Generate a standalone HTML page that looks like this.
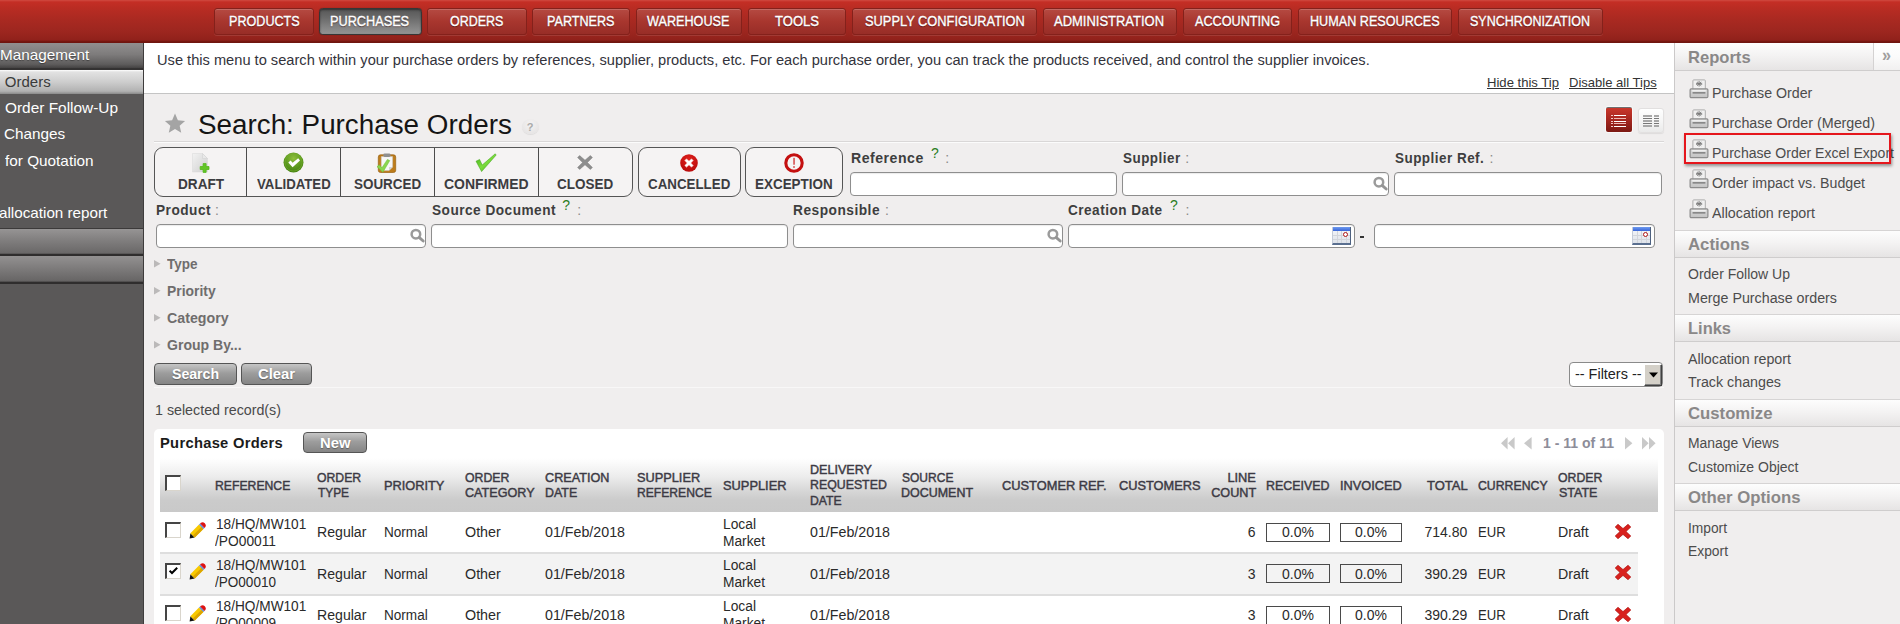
<!DOCTYPE html>
<html><head><meta charset="utf-8"><title>Purchase Orders</title>
<style>
*{box-sizing:border-box;margin:0;padding:0}
html,body{width:1900px;height:624px;overflow:hidden;background:#f0eeee;font-family:"Liberation Sans",sans-serif;font-size:14px;color:#222}
body{position:relative}
.t{position:absolute;white-space:nowrap;display:block}
.nb{position:absolute;top:8.4px;height:26.2px;border:1.2px solid #84211b;border-radius:3px;background:linear-gradient(#b54a42,#a8362e 50%,#982d27);box-shadow:inset 0 1px 0 rgba(255,255,255,.18),0 1px 0 rgba(255,255,255,.10)}
.nb.act{background:linear-gradient(#575757,#6a6a6a 35%,#858585 75%,#939393);border:1.5px solid #363636;border-radius:3.5px;box-shadow:inset 0 1px 2px rgba(0,0,0,.45),0 0 1px rgba(0,0,0,.4)}
.inp{position:absolute;height:24px;background:#fff;border:1px solid #8e8e8e;border-radius:4px;box-shadow:inset 0 1px 1px rgba(0,0,0,.08)}
.gbtn{position:absolute;border:1px solid #555;border-radius:4px;background:linear-gradient(#c6c6c6,#9d9d9d 45%,#858585);}
.sh{position:absolute;left:1675px;width:225px;height:27px;background:linear-gradient(#fdfdfd,#f4f3f3 45%,#e6e4e4);border-top:1px solid #d6d4d4;border-bottom:1px solid #cfcdcd}
</style></head><body>
<div class="" style="position:absolute;left:0px;top:0px;width:1900px;height:43px;background:linear-gradient(#d04a40 0,#c42e25 2px,#b92c23 8px,#a92921 20px,#9c261f 32px,#90211b 40px,#76170f 41.5px,#6c140f 43px);"></div>
<div class="nb" style="left:214.4px;width:99.4px"></div>
<span class="t " style="top:12.90px;font-size:14px;line-height:16px;height:16px;color:#fff;left:228.60px;transform-origin:0 0;transform:scaleX(0.9000);text-shadow:0 1px 1px rgba(40,0,0,.6);-webkit-text-stroke:.35px #fff;">PRODUCTS</span>
<div class="nb act" style="left:319.3px;width:102.4px;top:8.2px;height:26.4px"></div>
<span class="t " style="top:12.90px;font-size:14px;line-height:16px;height:16px;color:#fff;left:330.28px;transform-origin:0 0;transform:scaleX(0.9078);text-shadow:0 1px 1px rgba(40,0,0,.6);-webkit-text-stroke:.35px #fff;">PURCHASES</span>
<div class="nb" style="left:427.4px;width:99.4px"></div>
<span class="t " style="top:12.90px;font-size:14px;line-height:16px;height:16px;color:#fff;left:450.00px;transform-origin:0 0;transform:scaleX(0.8903);text-shadow:0 1px 1px rgba(40,0,0,.6);-webkit-text-stroke:.35px #fff;">ORDERS</span>
<div class="nb" style="left:532.4px;width:97.4px"></div>
<span class="t " style="top:12.90px;font-size:14px;line-height:16px;height:16px;color:#fff;left:546.80px;transform-origin:0 0;transform:scaleX(0.9007);text-shadow:0 1px 1px rgba(40,0,0,.6);-webkit-text-stroke:.35px #fff;">PARTNERS</span>
<div class="nb" style="left:636.4px;width:105.4px"></div>
<span class="t " style="top:12.90px;font-size:14px;line-height:16px;height:16px;color:#fff;left:647.00px;transform-origin:0 0;transform:scaleX(0.9028);text-shadow:0 1px 1px rgba(40,0,0,.6);-webkit-text-stroke:.35px #fff;">WAREHOUSE</span>
<div class="nb" style="left:748.4px;width:97.4px"></div>
<span class="t " style="top:12.90px;font-size:14px;line-height:16px;height:16px;color:#fff;left:774.50px;transform-origin:0 0;transform:scaleX(0.9322);text-shadow:0 1px 1px rgba(40,0,0,.6);-webkit-text-stroke:.35px #fff;">TOOLS</span>
<div class="nb" style="left:852.4px;width:184.4px"></div>
<span class="t " style="top:12.90px;font-size:14px;line-height:16px;height:16px;color:#fff;left:864.50px;transform-origin:0 0;transform:scaleX(0.9171);text-shadow:0 1px 1px rgba(40,0,0,.6);-webkit-text-stroke:.35px #fff;">SUPPLY CONFIGURATION</span>
<div class="nb" style="left:1043.4px;width:133.4px"></div>
<span class="t " style="top:12.90px;font-size:14px;line-height:16px;height:16px;color:#fff;left:1054.40px;transform-origin:0 0;transform:scaleX(0.9264);text-shadow:0 1px 1px rgba(40,0,0,.6);-webkit-text-stroke:.35px #fff;">ADMINISTRATION</span>
<div class="nb" style="left:1183.4px;width:108.4px"></div>
<span class="t " style="top:12.90px;font-size:14px;line-height:16px;height:16px;color:#fff;left:1194.50px;transform-origin:0 0;transform:scaleX(0.9032);text-shadow:0 1px 1px rgba(40,0,0,.6);-webkit-text-stroke:.35px #fff;">ACCOUNTING</span>
<div class="nb" style="left:1298.4px;width:153.4px"></div>
<span class="t " style="top:12.90px;font-size:14px;line-height:16px;height:16px;color:#fff;left:1309.60px;transform-origin:0 0;transform:scaleX(0.9013);text-shadow:0 1px 1px rgba(40,0,0,.6);-webkit-text-stroke:.35px #fff;">HUMAN RESOURCES</span>
<div class="nb" style="left:1458.4px;width:144.4px"></div>
<span class="t " style="top:12.90px;font-size:14px;line-height:16px;height:16px;color:#fff;left:1470.40px;transform-origin:0 0;transform:scaleX(0.8928);text-shadow:0 1px 1px rgba(40,0,0,.6);-webkit-text-stroke:.35px #fff;">SYNCHRONIZATION</span>
<div class="" style="position:absolute;left:0px;top:43px;width:144px;height:581px;background:#5a5858;border-right:1px solid #3e3c3c;"></div>
<div class="" style="position:absolute;left:0px;top:43px;width:143px;height:27px;background:linear-gradient(#918f8f,#7e7c7c 45%,#5e5c5c 85%,#444242);border-bottom:2px solid #343232;"></div>
<span class="t " style="top:46.20px;font-size:15px;line-height:17px;height:17px;color:#fff;left:-0.30px;transform-origin:0 0;transform:scaleX(1.0199);text-shadow:0 1px 1px rgba(0,0,0,.4);">Management</span>
<div class="" style="position:absolute;left:0px;top:70px;width:143px;height:24px;background:linear-gradient(#ffffff 0,#e2e2e2 2px,#cdcdcd 50%,#b2b2b2 88%,#8a8a8a 100%);"></div>
<span class="t " style="top:73.10px;font-size:15px;line-height:17px;height:17px;color:#3a3a3a;left:4.80px;transform-origin:0 0;">Orders</span>
<span class="t " style="top:98.60px;font-size:15px;line-height:17px;height:17px;color:#fff;left:4.60px;transform-origin:0 0;transform:scaleX(1.0270);">Order Follow-Up</span>
<span class="t " style="top:124.80px;font-size:15px;line-height:17px;height:17px;color:#fff;left:4.30px;transform-origin:0 0;transform:scaleX(1.0192);">Changes</span>
<span class="t " style="top:151.80px;font-size:15px;line-height:17px;height:17px;color:#fff;left:4.80px;transform-origin:0 0;transform:scaleX(1.0217);">for Quotation</span>
<span class="t " style="top:203.50px;font-size:15px;line-height:17px;height:17px;color:#fff;left:-0.80px;transform-origin:0 0;transform:scaleX(1.0147);">allocation report</span>
<div class="" style="position:absolute;left:0px;top:228px;width:143px;height:28px;background:linear-gradient(#969494,#7e7c7c 50%,#6a6868 96%,#4a4848);border-top:1px solid #3c3a3a;border-bottom:2px solid #2f2d2d;"></div>
<div class="" style="position:absolute;left:0px;top:256px;width:143px;height:28px;background:linear-gradient(#939191,#7c7a7a 50%,#686666 94%,#474545);border-bottom:2.5px solid #2f2d2d;"></div>
<div class="" style="position:absolute;left:144px;top:43px;width:1531px;height:51px;background:#fff;border-bottom:1px solid #c4c4c4;"></div>
<span class="t " style="top:52.00px;font-size:14px;line-height:16px;height:16px;color:#33333b;left:157.30px;transform-origin:0 0;transform:scaleX(1.0452);">Use this menu to search within your purchase orders by references, supplier, products, etc. For each purchase order, you can track the products received, and control the supplier invoices.</span>
<span class="t " style="top:74.70px;font-size:13px;line-height:15px;height:15px;color:#333;left:1487.00px;transform-origin:0 0;transform:scaleX(1.0065);text-decoration:underline;">Hide this Tip</span>
<span class="t " style="top:74.70px;font-size:13px;line-height:15px;height:15px;color:#333;left:1569.00px;transform-origin:0 0;transform:scaleX(1.0031);text-decoration:underline;">Disable all Tips</span>
<svg style="position:absolute;left:164px;top:113.4px" width="22" height="22" viewBox="0 0 22 22"><path fill="#a4a4a4" d="M11.00 0.60 L13.88 7.24 L21.08 7.92 L15.66 12.71 L17.23 19.78 L11.00 16.10 L4.77 19.78 L6.34 12.71 L0.92 7.92 L8.12 7.24 Z"/></svg>
<span class="t " style="top:109.50px;font-size:27px;line-height:30px;height:30px;color:#151515;left:198.40px;transform-origin:0 0;transform:scaleX(1.0301);">Search: Purchase Orders</span>
<div class="" style="position:absolute;left:521.5px;top:119px;width:17px;height:15px;border-radius:50%;background:radial-gradient(circle at 50% 35%,#f4f3f3,#e2e0e0);box-shadow:0 1px 1px rgba(0,0,0,.08);"></div>
<span class="t " style="top:120.60px;font-size:11px;line-height:12px;height:12px;color:#aaa;font-weight:bold;left:230.00px;width:600px;text-align:center;transform-origin:50% 0;">?</span>
<div class="" style="position:absolute;left:154px;top:141px;width:1510px;height:2px;border-top:1px solid #d9d7d7;border-bottom:1px solid #fbfbfb;"></div>
<div class="" style="position:absolute;left:1606px;top:107px;width:26px;height:25px;background:linear-gradient(#c9372b,#a5261f 50%,#7c1913);border-top:1px solid #6f6f6f;border-radius:2px;box-shadow:0 0 0 1px rgba(255,255,255,.6);"><div style="position:absolute;left:5px;top:7px;width:2px;height:1px;background:#f3c9c5"></div><div style="position:absolute;left:8px;top:7px;width:12px;height:1px;background:#fff"></div><div style="position:absolute;left:5px;top:10px;width:2px;height:1px;background:#f3c9c5"></div><div style="position:absolute;left:8px;top:10px;width:12px;height:1px;background:#f0b8b3"></div><div style="position:absolute;left:5px;top:12.5px;width:2px;height:1px;background:#f3c9c5"></div><div style="position:absolute;left:8px;top:12.5px;width:12px;height:1px;background:#fff"></div><div style="position:absolute;left:5px;top:15px;width:2px;height:1px;background:#f3c9c5"></div><div style="position:absolute;left:8px;top:15px;width:12px;height:1px;background:#f0b8b3"></div><div style="position:absolute;left:5px;top:17.5px;width:2px;height:1px;background:#f3c9c5"></div><div style="position:absolute;left:8px;top:17.5px;width:12px;height:1px;background:#fff"></div></div>
<div class="" style="position:absolute;left:1637.5px;top:108px;width:26px;height:24.5px;background:linear-gradient(#ffffff,#f4f4f4 60%,#eaeaea);border:1px solid #e2e0e0;border-radius:3px;box-shadow:0 1px 1px rgba(0,0,0,.08);"><div style="position:absolute;left:4.5px;top:6.3px;width:9px;height:1.3px;background:#a8a8a8"></div><div style="position:absolute;left:15px;top:6.3px;width:5px;height:1.3px;background:#a8a8a8"></div><div style="position:absolute;left:4.5px;top:8.8px;width:9px;height:1.3px;background:#777"></div><div style="position:absolute;left:15px;top:8.8px;width:5px;height:1.3px;background:#777"></div><div style="position:absolute;left:4.5px;top:11.4px;width:9px;height:1.3px;background:#a8a8a8"></div><div style="position:absolute;left:15px;top:11.4px;width:5px;height:1.3px;background:#a8a8a8"></div><div style="position:absolute;left:4.5px;top:13.9px;width:9px;height:1.3px;background:#777"></div><div style="position:absolute;left:15px;top:13.9px;width:5px;height:1.3px;background:#777"></div><div style="position:absolute;left:4.5px;top:16.4px;width:9px;height:1.3px;background:#a8a8a8"></div><div style="position:absolute;left:15px;top:16.4px;width:5px;height:1.3px;background:#a8a8a8"></div></div>
<div class="" style="position:absolute;left:154px;top:147px;width:479px;height:50px;background:#f5f3f3;border:1px solid #555;border-radius:9px;"></div>
<div class="" style="position:absolute;left:246px;top:148px;width:1px;height:48px;background:#4c4c4c;"></div>
<div class="" style="position:absolute;left:340px;top:148px;width:1px;height:48px;background:#4c4c4c;"></div>
<div class="" style="position:absolute;left:434px;top:148px;width:1px;height:48px;background:#4c4c4c;"></div>
<div class="" style="position:absolute;left:538px;top:148px;width:1px;height:48px;background:#4c4c4c;"></div>
<div class="" style="position:absolute;left:638px;top:147px;width:102.5px;height:50px;background:#f5f3f3;border:1px solid #555;border-radius:9px;"></div>
<div class="" style="position:absolute;left:745px;top:147px;width:98px;height:50px;background:#f5f3f3;border:1px solid #555;border-radius:9px;"></div>
<span class="t " style="top:175.60px;font-size:14px;line-height:16px;height:16px;color:#3c3c40;font-weight:bold;left:177.60px;transform-origin:0 0;transform:scaleX(0.9719);">DRAFT</span>
<span class="t " style="top:175.60px;font-size:14px;line-height:16px;height:16px;color:#3c3c40;font-weight:bold;left:257.30px;transform-origin:0 0;transform:scaleX(0.9445);">VALIDATED</span>
<span class="t " style="top:175.60px;font-size:14px;line-height:16px;height:16px;color:#3c3c40;font-weight:bold;left:354.40px;transform-origin:0 0;transform:scaleX(0.9599);">SOURCED</span>
<span class="t " style="top:175.60px;font-size:14px;line-height:16px;height:16px;color:#3c3c40;font-weight:bold;left:443.70px;transform-origin:0 0;transform:scaleX(0.9991);">CONFIRMED</span>
<span class="t " style="top:175.60px;font-size:14px;line-height:16px;height:16px;color:#3c3c40;font-weight:bold;left:557.40px;transform-origin:0 0;transform:scaleX(0.9616);">CLOSED</span>
<span class="t " style="top:175.60px;font-size:14px;line-height:16px;height:16px;color:#3c3c40;font-weight:bold;left:647.60px;transform-origin:0 0;transform:scaleX(0.9533);">CANCELLED</span>
<span class="t " style="top:175.60px;font-size:14px;line-height:16px;height:16px;color:#3c3c40;font-weight:bold;left:754.70px;transform-origin:0 0;transform:scaleX(0.9604);">EXCEPTION</span>

<svg style="position:absolute;left:191px;top:152px" width="20" height="22" viewBox="0 0 20 22"><defs><linearGradient id="pg" x1="0" y1="0" x2="1" y2="1"><stop offset="0" stop-color="#f2f2f2"/><stop offset="1" stop-color="#cfcfcf"/></linearGradient></defs><path d="M1.5 1.5 H11.5 L16.5 6.5 V20 H1.5 Z" fill="url(#pg)" stroke="#dcdcdc" stroke-width=".6"/><path d="M11.5 1.5 V6.5 H16.5 Z" fill="#e9e9e9" stroke="#cfcfcf" stroke-width=".5"/><path d="M12.1 11.6 h3 v2.9 h2.9 v3 h-2.9 v2.9 h-3 v-2.9 h-2.9 v-3 h2.9 Z" fill="#62c626" stroke="#55b81c" stroke-width=".8" stroke-linejoin="round"/></svg>
<svg style="position:absolute;left:282.9px;top:151.9px" width="21" height="21" viewBox="0 0 21 21"><defs><radialGradient id="vg" cx=".5" cy=".3" r=".7"><stop offset="0" stop-color="#8fbf3c"/><stop offset=".6" stop-color="#5d9a1f"/><stop offset="1" stop-color="#44800f"/></radialGradient></defs><circle cx="10.5" cy="10.5" r="10" fill="url(#vg)"/><circle cx="10.5" cy="10.5" r="8.6" fill="none" stroke="#7db233" stroke-width=".8" opacity=".7"/><path d="M5.3 10.6 L7.6 8.6 L9.6 10.8 L15.2 6.3 L17 8.4 L9.6 15.2 Z" fill="#fff"/></svg>
<svg style="position:absolute;left:376px;top:152.5px" width="22" height="21" viewBox="0 0 22 21"><rect x="2.3" y="1.8" width="17.4" height="17.7" rx="2.2" fill="#bd7c1b" stroke="#9a6212" stroke-width=".7"/><path d="M5.3 3.6 H16.6 V14 L13 17.6 H5.3 Z" fill="#f7f7f7" stroke="#c8c8c8" stroke-width=".5"/><path d="M13 17.6 V14 H16.6 Z" fill="#d4d4d4"/><rect x="7.3" y=".5" width="7.2" height="3.4" rx="1.4" fill="#8f8f8f"/><path d="M1 13.8 L3.2 11.8 L5.9 14.8 L11.4 6.4 L13.8 7.6 L6.9 19.2 Z" fill="#8ad650" stroke="#68bd30" stroke-width=".5"/></svg>
<svg style="position:absolute;left:475px;top:153px" width="22" height="20" viewBox="0 0 22 20"><defs><linearGradient id="cg" x1="0" y1="0" x2="1" y2="1"><stop offset="0" stop-color="#3fae18"/><stop offset=".5" stop-color="#7bdc3c"/><stop offset="1" stop-color="#3fae18"/></linearGradient></defs><path d="M1 8.2 L4.6 6.4 L7.2 12 L20.2 .8 L21.2 2 L6.6 18.6 Z" fill="url(#cg)" stroke="#3a9f14" stroke-width=".5"/></svg>
<svg style="position:absolute;left:577px;top:155px" width="16" height="15" viewBox="0 0 16 15"><path d="M2.6 .6 L8 5.2 L13.4 .6 L15.4 2.6 L10.4 7.5 L15.4 12.4 L13.4 14.4 L8 9.8 L2.6 14.4 L.6 12.4 L5.6 7.5 L.6 2.6 Z" fill="#8d8d8d" stroke="#7a7a7a" stroke-width=".5"/></svg>
<svg style="position:absolute;left:680px;top:154px" width="18" height="18" viewBox="0 0 18 18"><defs><radialGradient id="rg" cx=".5" cy=".3" r=".7"><stop offset="0" stop-color="#e0201c"/><stop offset="1" stop-color="#b90b0b"/></radialGradient></defs><circle cx="9" cy="9" r="8.8" fill="url(#rg)"/><path d="M6.5 4.9 L9 7.3 L11.5 4.9 L13.1 6.5 L10.7 9 L13.1 11.5 L11.5 13.1 L9 10.7 L6.5 13.1 L4.9 11.5 L7.3 9 L4.9 6.5 Z" fill="#fff" stroke="#fff" stroke-width=".6" stroke-linejoin="round"/></svg>
<svg style="position:absolute;left:784px;top:153px" width="20" height="20" viewBox="0 0 20 20"><circle cx="10" cy="10" r="8.2" fill="#f6f4f4" stroke="#c41010" stroke-width="3.1"/><rect x="9.2" y="4.8" width="1.7" height="7" rx=".6" fill="#d85a5a"/><circle cx="10" cy="14.1" r="1" fill="#d85a5a"/></svg>

<span class="t " style="top:149.70px;font-size:14px;line-height:16px;height:16px;color:#3e3e3e;font-weight:bold;letter-spacing:0.5px;left:850.70px;transform-origin:0 0;transform:scaleX(1.0083);">Reference</span>
<span class="t " style="top:145.00px;font-size:14px;line-height:16px;height:16px;color:#2a7d1c;left:931.00px;transform-origin:0 0;">?</span>
<span class="t " style="top:150.00px;font-size:14px;line-height:16px;height:16px;color:#8a8a8a;left:945.30px;transform-origin:0 0;">:</span>
<span class="t " style="top:149.70px;font-size:14px;line-height:16px;height:16px;color:#3e3e3e;font-weight:bold;letter-spacing:0.5px;left:1123.00px;transform-origin:0 0;transform:scaleX(0.9599);">Supplier</span>
<span class="t " style="top:150.00px;font-size:14px;line-height:16px;height:16px;color:#8a8a8a;left:1185.30px;transform-origin:0 0;">:</span>
<span class="t " style="top:149.70px;font-size:14px;line-height:16px;height:16px;color:#3e3e3e;font-weight:bold;letter-spacing:0.5px;left:1395.00px;transform-origin:0 0;transform:scaleX(0.9618);">Supplier Ref.</span>
<span class="t " style="top:150.00px;font-size:14px;line-height:16px;height:16px;color:#8a8a8a;left:1489.50px;transform-origin:0 0;">:</span>
<span class="t " style="top:201.80px;font-size:14px;line-height:16px;height:16px;color:#3e3e3e;font-weight:bold;letter-spacing:0.5px;left:156.00px;transform-origin:0 0;transform:scaleX(0.9753);">Product</span>
<span class="t " style="top:202.10px;font-size:14px;line-height:16px;height:16px;color:#8a8a8a;left:214.90px;transform-origin:0 0;">:</span>
<span class="t " style="top:201.80px;font-size:14px;line-height:16px;height:16px;color:#3e3e3e;font-weight:bold;letter-spacing:0.5px;left:432.00px;transform-origin:0 0;transform:scaleX(0.9741);">Source Document</span>
<span class="t " style="top:197.10px;font-size:14px;line-height:16px;height:16px;color:#2a7d1c;left:562.20px;transform-origin:0 0;">?</span>
<span class="t " style="top:202.10px;font-size:14px;line-height:16px;height:16px;color:#8a8a8a;left:577.30px;transform-origin:0 0;">:</span>
<span class="t " style="top:201.80px;font-size:14px;line-height:16px;height:16px;color:#3e3e3e;font-weight:bold;letter-spacing:0.5px;left:793.00px;transform-origin:0 0;transform:scaleX(0.9804);">Responsible</span>
<span class="t " style="top:202.10px;font-size:14px;line-height:16px;height:16px;color:#8a8a8a;left:885.00px;transform-origin:0 0;">:</span>
<span class="t " style="top:201.80px;font-size:14px;line-height:16px;height:16px;color:#3e3e3e;font-weight:bold;letter-spacing:0.5px;left:1068.40px;transform-origin:0 0;transform:scaleX(0.9700);">Creation Date</span>
<span class="t " style="top:197.10px;font-size:14px;line-height:16px;height:16px;color:#2a7d1c;left:1170.00px;transform-origin:0 0;">?</span>
<span class="t " style="top:202.10px;font-size:14px;line-height:16px;height:16px;color:#8a8a8a;left:1185.50px;transform-origin:0 0;">:</span>
<div class="inp" style="left:850px;top:172px;width:267px"></div>
<div class="inp" style="left:1122px;top:172px;width:267px"></div>
<svg style="position:absolute;left:1372px;top:175.5px" width="17" height="17" viewBox="0 0 17 17"><circle cx="6.9" cy="6.2" r="4.3" fill="#fff" stroke="#9b9b9b" stroke-width="2.5"/><path d="M10.4 9.6 L14.2 13" stroke="#959595" stroke-width="2.9" stroke-linecap="round"/></svg>
<div class="inp" style="left:1394px;top:172px;width:268px"></div>
<div class="inp" style="left:156px;top:224px;width:270px"></div>
<svg style="position:absolute;left:409px;top:227.5px" width="17" height="17" viewBox="0 0 17 17"><circle cx="6.9" cy="6.2" r="4.3" fill="#fff" stroke="#9b9b9b" stroke-width="2.5"/><path d="M10.4 9.6 L14.2 13" stroke="#959595" stroke-width="2.9" stroke-linecap="round"/></svg>
<div class="inp" style="left:431px;top:224px;width:357px"></div>
<div class="inp" style="left:793px;top:224px;width:270px"></div>
<svg style="position:absolute;left:1046px;top:227.5px" width="17" height="17" viewBox="0 0 17 17"><circle cx="6.9" cy="6.2" r="4.3" fill="#fff" stroke="#9b9b9b" stroke-width="2.5"/><path d="M10.4 9.6 L14.2 13" stroke="#959595" stroke-width="2.9" stroke-linecap="round"/></svg>
<div class="inp" style="left:1068px;top:224px;width:287px"></div>
<div style="position:absolute;left:1332px;top:227px;width:19px;height:18px;background:linear-gradient(#f6f7fa,#dfe3ea);border-right:1.5px solid #4d607f;border-bottom:2px solid #5a6f90;border-left:1px solid #c3cbd9;overflow:hidden"><div style="position:absolute;left:0;top:0;width:100%;height:4px;background:linear-gradient(#6f9aef,#3966d8)"></div><div style="position:absolute;left:0;top:7.5px;width:100%;height:1px;background:#d2d5db"></div><div style="position:absolute;left:0;top:12px;width:100%;height:1px;background:#d2d5db"></div><div style="position:absolute;left:4px;top:4px;width:1px;height:14px;background:#d2d5db"></div><div style="position:absolute;left:8px;top:4px;width:1px;height:14px;background:#d2d5db"></div><div style="position:absolute;left:12.5px;top:4px;width:1px;height:14px;background:#d2d5db"></div><div style="position:absolute;left:10px;top:5px;width:5.4px;height:5.4px;border-radius:50%;border:1.5px solid #b01616;background:#fff"></div></div>
<div class="inp" style="left:1374px;top:224px;width:281px"></div>
<div style="position:absolute;left:1632px;top:227px;width:19px;height:18px;background:linear-gradient(#f6f7fa,#dfe3ea);border-right:1.5px solid #4d607f;border-bottom:2px solid #5a6f90;border-left:1px solid #c3cbd9;overflow:hidden"><div style="position:absolute;left:0;top:0;width:100%;height:4px;background:linear-gradient(#6f9aef,#3966d8)"></div><div style="position:absolute;left:0;top:7.5px;width:100%;height:1px;background:#d2d5db"></div><div style="position:absolute;left:0;top:12px;width:100%;height:1px;background:#d2d5db"></div><div style="position:absolute;left:4px;top:4px;width:1px;height:14px;background:#d2d5db"></div><div style="position:absolute;left:8px;top:4px;width:1px;height:14px;background:#d2d5db"></div><div style="position:absolute;left:12.5px;top:4px;width:1px;height:14px;background:#d2d5db"></div><div style="position:absolute;left:10px;top:5px;width:5.4px;height:5.4px;border-radius:50%;border:1.5px solid #b01616;background:#fff"></div></div>
<div class="" style="position:absolute;left:1359.5px;top:236.2px;width:4.7px;height:1.8px;background:#333;"></div>
<span class="t " style="top:256.00px;font-size:14px;line-height:16px;height:16px;color:#6f6d6d;font-weight:bold;left:166.80px;transform-origin:0 0;transform:scaleX(0.9641);">Type</span>
<svg style="position:absolute;left:154px;top:260.2px" width="7" height="8" viewBox="0 0 7 8"><path d="M0 0 L6.6 3.7 L0 7.4 Z" fill="#bbb9b9"/></svg>
<span class="t " style="top:283.00px;font-size:14px;line-height:16px;height:16px;color:#6f6d6d;font-weight:bold;left:166.80px;transform-origin:0 0;transform:scaleX(0.9916);">Priority</span>
<svg style="position:absolute;left:154px;top:287.2px" width="7" height="8" viewBox="0 0 7 8"><path d="M0 0 L6.6 3.7 L0 7.4 Z" fill="#bbb9b9"/></svg>
<span class="t " style="top:310.00px;font-size:14px;line-height:16px;height:16px;color:#6f6d6d;font-weight:bold;left:166.80px;transform-origin:0 0;transform:scaleX(1.0151);">Category</span>
<svg style="position:absolute;left:154px;top:314.2px" width="7" height="8" viewBox="0 0 7 8"><path d="M0 0 L6.6 3.7 L0 7.4 Z" fill="#bbb9b9"/></svg>
<span class="t " style="top:337.00px;font-size:14px;line-height:16px;height:16px;color:#6f6d6d;font-weight:bold;left:166.80px;transform-origin:0 0;transform:scaleX(1.0026);">Group By...</span>
<svg style="position:absolute;left:154px;top:341.2px" width="7" height="8" viewBox="0 0 7 8"><path d="M0 0 L6.6 3.7 L0 7.4 Z" fill="#bbb9b9"/></svg>
<div class="gbtn" style="left:154px;top:363px;width:83px;height:22px"></div>
<div class="gbtn" style="left:241px;top:363px;width:71px;height:22px"></div>
<span class="t " style="top:365.60px;font-size:14px;line-height:16px;height:16px;color:#fff;font-weight:bold;left:172.30px;transform-origin:0 0;transform:scaleX(1.0086);text-shadow:0 1px 1px rgba(0,0,0,.35);">Search</span>
<span class="t " style="top:365.60px;font-size:14px;line-height:16px;height:16px;color:#fff;font-weight:bold;left:258.00px;transform-origin:0 0;transform:scaleX(1.0565);text-shadow:0 1px 1px rgba(0,0,0,.35);">Clear</span>
<div class="" style="position:absolute;left:154px;top:387px;width:1510px;height:1px;background:#f8f7f7;"></div>
<div class="" style="position:absolute;left:1568.5px;top:362px;width:94.5px;height:24.5px;background:#fff;border:1px solid #8a8a8a;border-radius:4px;"></div>
<span class="t " style="top:366.00px;font-size:14px;line-height:16px;height:16px;color:#222;left:1575.00px;transform-origin:0 0;transform:scaleX(1.0304);">-- Filters --</span>
<div class="" style="position:absolute;left:1643.5px;top:363.5px;width:18.5px;height:22px;background:#d4d0c8;border-top:1px solid #fff;border-left:1px solid #fff;border-right:1.5px solid #404040;border-bottom:1.5px solid #404040;box-shadow:inset -1px -1px 0 #808080;"></div>
<svg style="position:absolute;left:1648.5px;top:372px" width="9" height="6" viewBox="0 0 9 6"><path d="M0 .5 H9 L4.5 5.5 Z" fill="#000"/></svg>
<span class="t " style="top:402.00px;font-size:14px;line-height:16px;height:16px;color:#4a4a4a;left:155.00px;transform-origin:0 0;transform:scaleX(1.0184);">1 selected record(s)</span>
<div class="" style="position:absolute;left:154px;top:429px;width:1510px;height:200px;background:#fff;border-radius:5px 5px 0 0;"></div>
<span class="t " style="top:433.50px;font-size:15px;line-height:17px;height:17px;color:#1b1b1b;font-weight:bold;letter-spacing:0.3px;left:160.00px;transform-origin:0 0;transform:scaleX(0.9809);">Purchase Orders</span>
<div class="gbtn" style="left:303px;top:432px;width:64px;height:21px"></div>
<span class="t " style="top:434.60px;font-size:14px;line-height:16px;height:16px;color:#fff;font-weight:bold;left:320.20px;transform-origin:0 0;transform:scaleX(1.0595);text-shadow:0 1px 1px rgba(0,0,0,.35);">New</span>
<svg style="position:absolute;left:1501px;top:436.7px" width="14" height="13" viewBox="0 0 14 13"><path d="M6.6 0 V12.6 L0 6.3 Z M13.6 0 V12.6 L7 6.3 Z" fill="#c9c9c9"/></svg>
<svg style="position:absolute;left:1524px;top:436.7px" width="8" height="13" viewBox="0 0 8 13"><path d="M7.6 0 V12.6 L0 6.3 Z" fill="#c9c9c9"/></svg>
<svg style="position:absolute;left:1625px;top:436.7px" width="8" height="13" viewBox="0 0 8 13"><path d="M0 0 V12.6 L7.4 6.3 Z" fill="#c9c9c9"/></svg>
<svg style="position:absolute;left:1642px;top:436.7px" width="14" height="13" viewBox="0 0 14 13"><path d="M0 0 V12.6 L6.6 6.3 Z M7 0 V12.6 L13.6 6.3 Z" fill="#c9c9c9"/></svg>
<span class="t " style="top:434.70px;font-size:14px;line-height:16px;height:16px;color:#8d8d99;font-weight:bold;left:1542.50px;transform-origin:0 0;transform:scaleX(1.0025);">1 - 11 of 11</span>
<div class="" style="position:absolute;left:160px;top:458px;width:1498px;height:53.6px;background:linear-gradient(#ffffff 0,#fbfbfb 8%,#ececec 35%,#d6d6d6 62%,#cbcbcb 78%,#c9c9c9 100%);"></div>
<span class="t " style="top:477.60px;font-size:13px;line-height:15px;height:15px;color:#3c3a44;left:215.30px;transform-origin:0 0;transform:scaleX(0.9392);-webkit-text-stroke:.45px #3c3a44;">REFERENCE</span>
<span class="t " style="top:470.00px;font-size:13px;line-height:15px;height:15px;color:#3c3a44;left:317.40px;transform-origin:0 0;transform:scaleX(0.9415);-webkit-text-stroke:.45px #3c3a44;">ORDER</span>
<span class="t " style="top:484.70px;font-size:13px;line-height:15px;height:15px;color:#3c3a44;left:318.00px;transform-origin:0 0;transform:scaleX(0.9130);-webkit-text-stroke:.45px #3c3a44;">TYPE</span>
<span class="t " style="top:477.60px;font-size:13px;line-height:15px;height:15px;color:#3c3a44;left:384.30px;transform-origin:0 0;transform:scaleX(0.9838);-webkit-text-stroke:.45px #3c3a44;">PRIORITY</span>
<span class="t " style="top:470.00px;font-size:13px;line-height:15px;height:15px;color:#3c3a44;left:465.20px;transform-origin:0 0;transform:scaleX(0.9457);-webkit-text-stroke:.45px #3c3a44;">ORDER</span>
<span class="t " style="top:484.70px;font-size:13px;line-height:15px;height:15px;color:#3c3a44;left:465.20px;transform-origin:0 0;transform:scaleX(0.9700);-webkit-text-stroke:.45px #3c3a44;">CATEGORY</span>
<span class="t " style="top:470.00px;font-size:13px;line-height:15px;height:15px;color:#3c3a44;left:545.20px;transform-origin:0 0;transform:scaleX(0.9727);-webkit-text-stroke:.45px #3c3a44;">CREATION</span>
<span class="t " style="top:484.70px;font-size:13px;line-height:15px;height:15px;color:#3c3a44;left:545.20px;transform-origin:0 0;transform:scaleX(0.9553);-webkit-text-stroke:.45px #3c3a44;">DATE</span>
<span class="t " style="top:470.00px;font-size:13px;line-height:15px;height:15px;color:#3c3a44;left:637.40px;transform-origin:0 0;transform:scaleX(0.9813);-webkit-text-stroke:.45px #3c3a44;">SUPPLIER</span>
<span class="t " style="top:484.70px;font-size:13px;line-height:15px;height:15px;color:#3c3a44;left:636.70px;transform-origin:0 0;transform:scaleX(0.9329);-webkit-text-stroke:.45px #3c3a44;">REFERENCE</span>
<span class="t " style="top:477.60px;font-size:13px;line-height:15px;height:15px;color:#3c3a44;left:723.30px;transform-origin:0 0;transform:scaleX(0.9875);-webkit-text-stroke:.45px #3c3a44;">SUPPLIER</span>
<span class="t " style="top:462.00px;font-size:13px;line-height:15px;height:15px;color:#3c3a44;left:809.60px;transform-origin:0 0;transform:scaleX(0.9662);-webkit-text-stroke:.45px #3c3a44;">DELIVERY</span>
<span class="t " style="top:477.10px;font-size:13px;line-height:15px;height:15px;color:#3c3a44;left:809.60px;transform-origin:0 0;transform:scaleX(0.9493);-webkit-text-stroke:.45px #3c3a44;">REQUESTED</span>
<span class="t " style="top:492.50px;font-size:13px;line-height:15px;height:15px;color:#3c3a44;left:809.60px;transform-origin:0 0;transform:scaleX(0.9375);-webkit-text-stroke:.45px #3c3a44;">DATE</span>
<span class="t " style="top:470.00px;font-size:13px;line-height:15px;height:15px;color:#3c3a44;left:901.60px;transform-origin:0 0;transform:scaleX(0.9242);-webkit-text-stroke:.45px #3c3a44;">SOURCE</span>
<span class="t " style="top:484.70px;font-size:13px;line-height:15px;height:15px;color:#3c3a44;left:900.50px;transform-origin:0 0;transform:scaleX(0.9586);-webkit-text-stroke:.45px #3c3a44;">DOCUMENT</span>
<span class="t " style="top:477.60px;font-size:13px;line-height:15px;height:15px;color:#3c3a44;left:1002.20px;transform-origin:0 0;transform:scaleX(0.9874);-webkit-text-stroke:.45px #3c3a44;">CUSTOMER REF.</span>
<span class="t " style="top:477.60px;font-size:13px;line-height:15px;height:15px;color:#3c3a44;left:1119.00px;transform-origin:0 0;transform:scaleX(0.9840);-webkit-text-stroke:.45px #3c3a44;">CUSTOMERS</span>
<span class="t " style="top:470.00px;font-size:13px;line-height:15px;height:15px;color:#3c3a44;right:644.00px;transform-origin:100% 0;transform:scaleX(0.9861);-webkit-text-stroke:.45px #3c3a44;">LINE</span>
<span class="t " style="top:484.70px;font-size:13px;line-height:15px;height:15px;color:#3c3a44;right:644.00px;transform-origin:100% 0;transform:scaleX(0.9737);-webkit-text-stroke:.45px #3c3a44;">COUNT</span>
<span class="t " style="top:477.60px;font-size:13px;line-height:15px;height:15px;color:#3c3a44;left:1266.30px;transform-origin:0 0;transform:scaleX(0.9540);-webkit-text-stroke:.45px #3c3a44;">RECEIVED</span>
<span class="t " style="top:477.60px;font-size:13px;line-height:15px;height:15px;color:#3c3a44;left:1340.00px;transform-origin:0 0;transform:scaleX(0.9802);-webkit-text-stroke:.45px #3c3a44;">INVOICED</span>
<span class="t " style="top:477.60px;font-size:13px;line-height:15px;height:15px;color:#3c3a44;left:1426.50px;transform-origin:0 0;transform:scaleX(1.0001);-webkit-text-stroke:.45px #3c3a44;">TOTAL</span>
<span class="t " style="top:477.60px;font-size:13px;line-height:15px;height:15px;color:#3c3a44;left:1478.00px;transform-origin:0 0;transform:scaleX(0.9447);-webkit-text-stroke:.45px #3c3a44;">CURRENCY</span>
<span class="t " style="top:470.00px;font-size:13px;line-height:15px;height:15px;color:#3c3a44;left:1558.20px;transform-origin:0 0;transform:scaleX(0.9457);-webkit-text-stroke:.45px #3c3a44;">ORDER</span>
<span class="t " style="top:484.70px;font-size:13px;line-height:15px;height:15px;color:#3c3a44;left:1559.00px;transform-origin:0 0;transform:scaleX(0.9608);-webkit-text-stroke:.45px #3c3a44;">STATE</span>
<div class="" style="position:absolute;left:165px;top:475px;width:15.5px;height:15.5px;background:#fff;border-top:2px solid #454545;border-left:2px solid #454545;border-right:1.5px solid #d9d5cc;border-bottom:1.5px solid #d9d5cc;"></div>
<div class="" style="position:absolute;left:165px;top:522px;width:15.5px;height:15.5px;background:#fff;border-top:2px solid #454545;border-left:2px solid #454545;border-right:1.5px solid #d9d5cc;border-bottom:1.5px solid #d9d5cc;"></div>
<svg style="position:absolute;left:189px;top:522px" width="17" height="17" viewBox="0 0 17 17"><path d="M.6 16.4 L1.4 11.2 L5.8 15.6 Z" fill="#111"/><path d="M1.4 11.2 L10 2.6 L14.4 7 L5.8 15.6 Z" fill="#f8c900"/><path d="M3.8 13.6 L12.4 5 L14.4 7 L5.8 15.6 Z" fill="#dca500"/><path d="M10 2.6 L11.1 1.5 L15.5 5.9 L14.4 7 Z" fill="#5b8fe0"/><path d="M11.1 1.5 L11.9 .8 Q13.8 -.6 15.8 1.2 Q17.6 3.2 16.3 5.1 L15.5 5.9 Z" fill="#dc1212"/></svg>
<span class="t " style="top:516.00px;font-size:14px;line-height:16px;height:16px;color:#2a2a2a;left:215.70px;transform-origin:0 0;transform:scaleX(0.9753);">18/HQ/MW101</span>
<span class="t " style="top:533.00px;font-size:14px;line-height:16px;height:16px;color:#2a2a2a;left:215.20px;transform-origin:0 0;transform:scaleX(0.9837);">/PO00011</span>
<span class="t " style="top:524.00px;font-size:14px;line-height:16px;height:16px;color:#2a2a2a;left:317.40px;transform-origin:0 0;transform:scaleX(1.0076);">Regular</span>
<span class="t " style="top:524.00px;font-size:14px;line-height:16px;height:16px;color:#2a2a2a;left:384.30px;transform-origin:0 0;transform:scaleX(0.9686);">Normal</span>
<span class="t " style="top:524.00px;font-size:14px;line-height:16px;height:16px;color:#2a2a2a;left:465.20px;transform-origin:0 0;transform:scaleX(1.0225);">Other</span>
<span class="t " style="top:524.00px;font-size:14px;line-height:16px;height:16px;color:#2a2a2a;left:545.20px;transform-origin:0 0;transform:scaleX(1.0175);">01/Feb/2018</span>
<span class="t " style="top:516.00px;font-size:14px;line-height:16px;height:16px;color:#2a2a2a;left:722.60px;transform-origin:0 0;transform:scaleX(0.9860);">Local</span>
<span class="t " style="top:533.00px;font-size:14px;line-height:16px;height:16px;color:#2a2a2a;left:722.60px;transform-origin:0 0;transform:scaleX(0.9816);">Market</span>
<span class="t " style="top:524.00px;font-size:14px;line-height:16px;height:16px;color:#2a2a2a;left:809.60px;transform-origin:0 0;transform:scaleX(1.0175);">01/Feb/2018</span>
<span class="t " style="top:524.00px;font-size:14px;line-height:16px;height:16px;color:#2a2a2a;right:644.40px;transform-origin:100% 0;">6</span>
<div class="" style="position:absolute;left:1266px;top:523px;width:64px;height:19px;border:1px solid #4a4a4a;background:#fff;"></div>
<div class="" style="position:absolute;left:1340px;top:523px;width:62px;height:19px;border:1px solid #4a4a4a;background:#fff;"></div>
<span class="t " style="top:524.00px;font-size:14px;line-height:16px;height:16px;color:#2a2a2a;left:998.00px;width:600px;text-align:center;transform-origin:50% 0;">0.0%</span>
<span class="t " style="top:524.00px;font-size:14px;line-height:16px;height:16px;color:#2a2a2a;left:1071.00px;width:600px;text-align:center;transform-origin:50% 0;">0.0%</span>
<span class="t " style="top:524.00px;font-size:14px;line-height:16px;height:16px;color:#2a2a2a;right:432.70px;transform-origin:100% 0;">714.80</span>
<span class="t " style="top:524.00px;font-size:14px;line-height:16px;height:16px;color:#2a2a2a;left:1478.00px;transform-origin:0 0;transform:scaleX(0.9371);">EUR</span>
<span class="t " style="top:524.00px;font-size:14px;line-height:16px;height:16px;color:#2a2a2a;left:1558.30px;transform-origin:0 0;transform:scaleX(1.0119);">Draft</span>
<svg style="position:absolute;left:1615px;top:524px" width="16" height="15" viewBox="0 0 16 15"><path d="M3 .3 L8 4.6 L13 .3 L15.8 3 L11 7.5 L15.8 12 L13 14.7 L8 10.4 L3 14.7 L.2 12 L5 7.5 L.2 3 Z" fill="#d8211d" stroke="#b01412" stroke-width=".7" stroke-linejoin="round"/></svg>
<div class="" style="position:absolute;left:160px;top:553px;width:1478px;height:41px;background:#f3f3f3;"></div>
<div class="" style="position:absolute;left:160px;top:552px;width:1478px;height:1.5px;background:#dedede;"></div>
<div class="" style="position:absolute;left:165px;top:563px;width:15.5px;height:15.5px;background:#fff;border-top:2px solid #454545;border-left:2px solid #454545;border-right:1.5px solid #d9d5cc;border-bottom:1.5px solid #d9d5cc;"><svg style="position:absolute;left:1.5px;top:2px" width="9" height="8" viewBox="0 0 9 8"><path d="M.6 3.6 L3 6 L8.2 .8" fill="none" stroke="#000" stroke-width="2"/></svg></div>
<svg style="position:absolute;left:189px;top:563px" width="17" height="17" viewBox="0 0 17 17"><path d="M.6 16.4 L1.4 11.2 L5.8 15.6 Z" fill="#111"/><path d="M1.4 11.2 L10 2.6 L14.4 7 L5.8 15.6 Z" fill="#f8c900"/><path d="M3.8 13.6 L12.4 5 L14.4 7 L5.8 15.6 Z" fill="#dca500"/><path d="M10 2.6 L11.1 1.5 L15.5 5.9 L14.4 7 Z" fill="#5b8fe0"/><path d="M11.1 1.5 L11.9 .8 Q13.8 -.6 15.8 1.2 Q17.6 3.2 16.3 5.1 L15.5 5.9 Z" fill="#dc1212"/></svg>
<span class="t " style="top:557.00px;font-size:14px;line-height:16px;height:16px;color:#2a2a2a;left:215.70px;transform-origin:0 0;transform:scaleX(0.9753);">18/HQ/MW101</span>
<span class="t " style="top:574.00px;font-size:14px;line-height:16px;height:16px;color:#2a2a2a;left:215.20px;transform-origin:0 0;transform:scaleX(0.9675);">/PO00010</span>
<span class="t " style="top:566.00px;font-size:14px;line-height:16px;height:16px;color:#2a2a2a;left:317.40px;transform-origin:0 0;transform:scaleX(1.0076);">Regular</span>
<span class="t " style="top:566.00px;font-size:14px;line-height:16px;height:16px;color:#2a2a2a;left:384.30px;transform-origin:0 0;transform:scaleX(0.9686);">Normal</span>
<span class="t " style="top:566.00px;font-size:14px;line-height:16px;height:16px;color:#2a2a2a;left:465.20px;transform-origin:0 0;transform:scaleX(1.0225);">Other</span>
<span class="t " style="top:566.00px;font-size:14px;line-height:16px;height:16px;color:#2a2a2a;left:545.20px;transform-origin:0 0;transform:scaleX(1.0175);">01/Feb/2018</span>
<span class="t " style="top:557.00px;font-size:14px;line-height:16px;height:16px;color:#2a2a2a;left:722.60px;transform-origin:0 0;transform:scaleX(0.9860);">Local</span>
<span class="t " style="top:574.00px;font-size:14px;line-height:16px;height:16px;color:#2a2a2a;left:722.60px;transform-origin:0 0;transform:scaleX(0.9816);">Market</span>
<span class="t " style="top:566.00px;font-size:14px;line-height:16px;height:16px;color:#2a2a2a;left:809.60px;transform-origin:0 0;transform:scaleX(1.0175);">01/Feb/2018</span>
<span class="t " style="top:566.00px;font-size:14px;line-height:16px;height:16px;color:#2a2a2a;right:644.40px;transform-origin:100% 0;">3</span>
<div class="" style="position:absolute;left:1266px;top:564px;width:64px;height:19px;border:1px solid #4a4a4a;background:#f3f3f3;"></div>
<div class="" style="position:absolute;left:1340px;top:564px;width:62px;height:19px;border:1px solid #4a4a4a;background:#f3f3f3;"></div>
<span class="t " style="top:566.00px;font-size:14px;line-height:16px;height:16px;color:#2a2a2a;left:998.00px;width:600px;text-align:center;transform-origin:50% 0;">0.0%</span>
<span class="t " style="top:566.00px;font-size:14px;line-height:16px;height:16px;color:#2a2a2a;left:1071.00px;width:600px;text-align:center;transform-origin:50% 0;">0.0%</span>
<span class="t " style="top:566.00px;font-size:14px;line-height:16px;height:16px;color:#2a2a2a;right:432.70px;transform-origin:100% 0;">390.29</span>
<span class="t " style="top:566.00px;font-size:14px;line-height:16px;height:16px;color:#2a2a2a;left:1478.00px;transform-origin:0 0;transform:scaleX(0.9371);">EUR</span>
<span class="t " style="top:566.00px;font-size:14px;line-height:16px;height:16px;color:#2a2a2a;left:1558.30px;transform-origin:0 0;transform:scaleX(1.0119);">Draft</span>
<svg style="position:absolute;left:1615px;top:565px" width="16" height="15" viewBox="0 0 16 15"><path d="M3 .3 L8 4.6 L13 .3 L15.8 3 L11 7.5 L15.8 12 L13 14.7 L8 10.4 L3 14.7 L.2 12 L5 7.5 L.2 3 Z" fill="#d8211d" stroke="#b01412" stroke-width=".7" stroke-linejoin="round"/></svg>
<div class="" style="position:absolute;left:160px;top:594px;width:1478px;height:1.5px;background:#dedede;"></div>
<div class="" style="position:absolute;left:165px;top:605px;width:15.5px;height:15.5px;background:#fff;border-top:2px solid #454545;border-left:2px solid #454545;border-right:1.5px solid #d9d5cc;border-bottom:1.5px solid #d9d5cc;"></div>
<svg style="position:absolute;left:189px;top:605px" width="17" height="17" viewBox="0 0 17 17"><path d="M.6 16.4 L1.4 11.2 L5.8 15.6 Z" fill="#111"/><path d="M1.4 11.2 L10 2.6 L14.4 7 L5.8 15.6 Z" fill="#f8c900"/><path d="M3.8 13.6 L12.4 5 L14.4 7 L5.8 15.6 Z" fill="#dca500"/><path d="M10 2.6 L11.1 1.5 L15.5 5.9 L14.4 7 Z" fill="#5b8fe0"/><path d="M11.1 1.5 L11.9 .8 Q13.8 -.6 15.8 1.2 Q17.6 3.2 16.3 5.1 L15.5 5.9 Z" fill="#dc1212"/></svg>
<span class="t " style="top:598.00px;font-size:14px;line-height:16px;height:16px;color:#2a2a2a;left:215.70px;transform-origin:0 0;transform:scaleX(0.9753);">18/HQ/MW101</span>
<span class="t " style="top:615.00px;font-size:14px;line-height:16px;height:16px;color:#2a2a2a;left:215.20px;transform-origin:0 0;transform:scaleX(0.9675);">/PO00009</span>
<span class="t " style="top:607.00px;font-size:14px;line-height:16px;height:16px;color:#2a2a2a;left:317.40px;transform-origin:0 0;transform:scaleX(1.0076);">Regular</span>
<span class="t " style="top:607.00px;font-size:14px;line-height:16px;height:16px;color:#2a2a2a;left:384.30px;transform-origin:0 0;transform:scaleX(0.9686);">Normal</span>
<span class="t " style="top:607.00px;font-size:14px;line-height:16px;height:16px;color:#2a2a2a;left:465.20px;transform-origin:0 0;transform:scaleX(1.0225);">Other</span>
<span class="t " style="top:607.00px;font-size:14px;line-height:16px;height:16px;color:#2a2a2a;left:545.20px;transform-origin:0 0;transform:scaleX(1.0175);">01/Feb/2018</span>
<span class="t " style="top:598.00px;font-size:14px;line-height:16px;height:16px;color:#2a2a2a;left:722.60px;transform-origin:0 0;transform:scaleX(0.9860);">Local</span>
<span class="t " style="top:615.00px;font-size:14px;line-height:16px;height:16px;color:#2a2a2a;left:722.60px;transform-origin:0 0;transform:scaleX(0.9816);">Market</span>
<span class="t " style="top:607.00px;font-size:14px;line-height:16px;height:16px;color:#2a2a2a;left:809.60px;transform-origin:0 0;transform:scaleX(1.0175);">01/Feb/2018</span>
<span class="t " style="top:607.00px;font-size:14px;line-height:16px;height:16px;color:#2a2a2a;right:644.40px;transform-origin:100% 0;">3</span>
<div class="" style="position:absolute;left:1266px;top:606px;width:64px;height:19px;border:1px solid #4a4a4a;background:#fff;"></div>
<div class="" style="position:absolute;left:1340px;top:606px;width:62px;height:19px;border:1px solid #4a4a4a;background:#fff;"></div>
<span class="t " style="top:607.00px;font-size:14px;line-height:16px;height:16px;color:#2a2a2a;left:998.00px;width:600px;text-align:center;transform-origin:50% 0;">0.0%</span>
<span class="t " style="top:607.00px;font-size:14px;line-height:16px;height:16px;color:#2a2a2a;left:1071.00px;width:600px;text-align:center;transform-origin:50% 0;">0.0%</span>
<span class="t " style="top:607.00px;font-size:14px;line-height:16px;height:16px;color:#2a2a2a;right:432.70px;transform-origin:100% 0;">390.29</span>
<span class="t " style="top:607.00px;font-size:14px;line-height:16px;height:16px;color:#2a2a2a;left:1478.00px;transform-origin:0 0;transform:scaleX(0.9371);">EUR</span>
<span class="t " style="top:607.00px;font-size:14px;line-height:16px;height:16px;color:#2a2a2a;left:1558.30px;transform-origin:0 0;transform:scaleX(1.0119);">Draft</span>
<svg style="position:absolute;left:1615px;top:607px" width="16" height="15" viewBox="0 0 16 15"><path d="M3 .3 L8 4.6 L13 .3 L15.8 3 L11 7.5 L15.8 12 L13 14.7 L8 10.4 L3 14.7 L.2 12 L5 7.5 L.2 3 Z" fill="#d8211d" stroke="#b01412" stroke-width=".7" stroke-linejoin="round"/></svg>
<div class="" style="position:absolute;left:1674px;top:43px;width:1px;height:581px;background:#cbc9c9;"></div>
<div class="" style="position:absolute;left:1675px;top:43px;width:225px;height:581px;background:#f0eeee;"></div>
<div class="sh" style="top:43px;height:28px;border-top:none;"></div>
<span class="t " style="top:47.50px;font-size:17px;line-height:19px;height:19px;color:#8a8888;font-weight:bold;left:1688.30px;transform-origin:0 0;transform:scaleX(0.9746);">Reports</span>
<div class="" style="position:absolute;left:1873px;top:43px;width:1px;height:27px;background:#d4d2d2;"></div>
<div class="" style="position:absolute;left:1874px;top:43px;width:26px;height:27px;background:linear-gradient(#ffffff,#fbfbfb 50%,#f1f0f0);"></div>
<span class="t " style="top:44.00px;font-size:19px;line-height:21px;height:21px;color:#a09e9e;font-weight:bold;left:1881.80px;transform-origin:0 0;transform:scaleX(0.8517);">»</span>
<div class="sh" style="top:230px;height:28px;"></div>
<span class="t " style="top:234.80px;font-size:17px;line-height:19px;height:19px;color:#8a8888;font-weight:bold;left:1688.30px;transform-origin:0 0;transform:scaleX(0.9865);">Actions</span>
<div class="sh" style="top:314px;height:28px;"></div>
<span class="t " style="top:318.80px;font-size:17px;line-height:19px;height:19px;color:#8a8888;font-weight:bold;left:1688.30px;transform-origin:0 0;transform:scaleX(0.9684);">Links</span>
<div class="sh" style="top:399px;height:28px;"></div>
<span class="t " style="top:403.80px;font-size:17px;line-height:19px;height:19px;color:#8a8888;font-weight:bold;left:1688.30px;transform-origin:0 0;transform:scaleX(0.9831);">Customize</span>
<div class="sh" style="top:483px;height:28px;"></div>
<span class="t " style="top:487.80px;font-size:17px;line-height:19px;height:19px;color:#8a8888;font-weight:bold;left:1688.30px;transform-origin:0 0;transform:scaleX(0.9844);">Other Options</span>
<svg style="position:absolute;left:1688.5px;top:78.9px" width="20" height="20" viewBox="0 0 20 20"><defs><linearGradient id="pb" x1="0" y1="0" x2="0" y2="1"><stop offset="0" stop-color="#d9d9d9"/><stop offset="1" stop-color="#c3c3c3"/></linearGradient></defs><rect x="3.9" y=".9" width="12.4" height="9.6" rx=".8" fill="#f1f1f1" stroke="#adadad" stroke-width="1"/><path d="M10.1 1.9 V7.6 M7 4.2 L13.2 5.4 M13.2 4.2 L7 5.4 M8 2.8 L12.2 6.8 M12.2 2.8 L8 6.8" stroke="#7a7a7a" stroke-width=".9" fill="none"/><rect x="1.1" y="9.9" width="17.8" height="8.7" rx="1.1" fill="url(#pb)" stroke="#8c8c8c" stroke-width="1.2"/><rect x="3.2" y="11" width="13.6" height="1.5" fill="#efefef"/><rect x="3.6" y="13.1" width="12.8" height="1.5" fill="#808080"/></svg>
<span class="t " style="top:85.20px;font-size:14px;line-height:16px;height:16px;color:#4c4c4c;left:1712.30px;transform-origin:0 0;transform:scaleX(1.0150);">Purchase Order</span>
<svg style="position:absolute;left:1688.5px;top:108.9px" width="20" height="20" viewBox="0 0 20 20"><defs><linearGradient id="pb" x1="0" y1="0" x2="0" y2="1"><stop offset="0" stop-color="#d9d9d9"/><stop offset="1" stop-color="#c3c3c3"/></linearGradient></defs><rect x="3.9" y=".9" width="12.4" height="9.6" rx=".8" fill="#f1f1f1" stroke="#adadad" stroke-width="1"/><path d="M10.1 1.9 V7.6 M7 4.2 L13.2 5.4 M13.2 4.2 L7 5.4 M8 2.8 L12.2 6.8 M12.2 2.8 L8 6.8" stroke="#7a7a7a" stroke-width=".9" fill="none"/><rect x="1.1" y="9.9" width="17.8" height="8.7" rx="1.1" fill="url(#pb)" stroke="#8c8c8c" stroke-width="1.2"/><rect x="3.2" y="11" width="13.6" height="1.5" fill="#efefef"/><rect x="3.6" y="13.1" width="12.8" height="1.5" fill="#808080"/></svg>
<span class="t " style="top:115.15px;font-size:14px;line-height:16px;height:16px;color:#4c4c4c;left:1712.30px;transform-origin:0 0;transform:scaleX(1.0219);">Purchase Order (Merged)</span>
<svg style="position:absolute;left:1688.5px;top:138.8px" width="20" height="20" viewBox="0 0 20 20"><defs><linearGradient id="pb" x1="0" y1="0" x2="0" y2="1"><stop offset="0" stop-color="#d9d9d9"/><stop offset="1" stop-color="#c3c3c3"/></linearGradient></defs><rect x="3.9" y=".9" width="12.4" height="9.6" rx=".8" fill="#f1f1f1" stroke="#adadad" stroke-width="1"/><path d="M10.1 1.9 V7.6 M7 4.2 L13.2 5.4 M13.2 4.2 L7 5.4 M8 2.8 L12.2 6.8 M12.2 2.8 L8 6.8" stroke="#7a7a7a" stroke-width=".9" fill="none"/><rect x="1.1" y="9.9" width="17.8" height="8.7" rx="1.1" fill="url(#pb)" stroke="#8c8c8c" stroke-width="1.2"/><rect x="3.2" y="11" width="13.6" height="1.5" fill="#efefef"/><rect x="3.6" y="13.1" width="12.8" height="1.5" fill="#808080"/></svg>
<span class="t " style="top:145.10px;font-size:14px;line-height:16px;height:16px;color:#4c4c4c;left:1712.30px;transform-origin:0 0;transform:scaleX(1.0039);">Purchase Order Excel Export</span>
<svg style="position:absolute;left:1688.5px;top:168.8px" width="20" height="20" viewBox="0 0 20 20"><defs><linearGradient id="pb" x1="0" y1="0" x2="0" y2="1"><stop offset="0" stop-color="#d9d9d9"/><stop offset="1" stop-color="#c3c3c3"/></linearGradient></defs><rect x="3.9" y=".9" width="12.4" height="9.6" rx=".8" fill="#f1f1f1" stroke="#adadad" stroke-width="1"/><path d="M10.1 1.9 V7.6 M7 4.2 L13.2 5.4 M13.2 4.2 L7 5.4 M8 2.8 L12.2 6.8 M12.2 2.8 L8 6.8" stroke="#7a7a7a" stroke-width=".9" fill="none"/><rect x="1.1" y="9.9" width="17.8" height="8.7" rx="1.1" fill="url(#pb)" stroke="#8c8c8c" stroke-width="1.2"/><rect x="3.2" y="11" width="13.6" height="1.5" fill="#efefef"/><rect x="3.6" y="13.1" width="12.8" height="1.5" fill="#808080"/></svg>
<span class="t " style="top:175.05px;font-size:14px;line-height:16px;height:16px;color:#4c4c4c;left:1712.30px;transform-origin:0 0;transform:scaleX(1.0136);">Order impact vs. Budget</span>
<svg style="position:absolute;left:1688.5px;top:198.7px" width="20" height="20" viewBox="0 0 20 20"><defs><linearGradient id="pb" x1="0" y1="0" x2="0" y2="1"><stop offset="0" stop-color="#d9d9d9"/><stop offset="1" stop-color="#c3c3c3"/></linearGradient></defs><rect x="3.9" y=".9" width="12.4" height="9.6" rx=".8" fill="#f1f1f1" stroke="#adadad" stroke-width="1"/><path d="M10.1 1.9 V7.6 M7 4.2 L13.2 5.4 M13.2 4.2 L7 5.4 M8 2.8 L12.2 6.8 M12.2 2.8 L8 6.8" stroke="#7a7a7a" stroke-width=".9" fill="none"/><rect x="1.1" y="9.9" width="17.8" height="8.7" rx="1.1" fill="url(#pb)" stroke="#8c8c8c" stroke-width="1.2"/><rect x="3.2" y="11" width="13.6" height="1.5" fill="#efefef"/><rect x="3.6" y="13.1" width="12.8" height="1.5" fill="#808080"/></svg>
<span class="t " style="top:205.00px;font-size:14px;line-height:16px;height:16px;color:#4c4c4c;left:1712.30px;transform-origin:0 0;transform:scaleX(1.0181);">Allocation report</span>
<div class="" style="position:absolute;left:1684.3px;top:133.3px;width:206.4px;height:30.4px;border:2.3px solid #e5161c;box-shadow:1px 2px 3px rgba(0,0,0,.4);"></div>
<span class="t " style="top:266.30px;font-size:14px;line-height:16px;height:16px;color:#4c4c4c;left:1688.30px;transform-origin:0 0;transform:scaleX(1.0008);">Order Follow Up</span>
<span class="t " style="top:290.30px;font-size:14px;line-height:16px;height:16px;color:#4c4c4c;left:1688.30px;transform-origin:0 0;transform:scaleX(1.0185);">Merge Purchase orders</span>
<span class="t " style="top:351.20px;font-size:14px;line-height:16px;height:16px;color:#4c4c4c;left:1688.30px;transform-origin:0 0;transform:scaleX(1.0181);">Allocation report</span>
<span class="t " style="top:374.30px;font-size:14px;line-height:16px;height:16px;color:#4c4c4c;left:1688.30px;transform-origin:0 0;transform:scaleX(1.0186);">Track changes</span>
<span class="t " style="top:435.30px;font-size:14px;line-height:16px;height:16px;color:#4c4c4c;left:1688.30px;transform-origin:0 0;transform:scaleX(0.9937);">Manage Views</span>
<span class="t " style="top:459.40px;font-size:14px;line-height:16px;height:16px;color:#4c4c4c;left:1688.30px;transform-origin:0 0;transform:scaleX(1.0002);">Customize Object</span>
<span class="t " style="top:519.60px;font-size:14px;line-height:16px;height:16px;color:#4c4c4c;left:1688.30px;transform-origin:0 0;transform:scaleX(0.9830);">Import</span>
<span class="t " style="top:543.00px;font-size:14px;line-height:16px;height:16px;color:#4c4c4c;left:1688.30px;transform-origin:0 0;transform:scaleX(0.9886);">Export</span>
</body></html>
